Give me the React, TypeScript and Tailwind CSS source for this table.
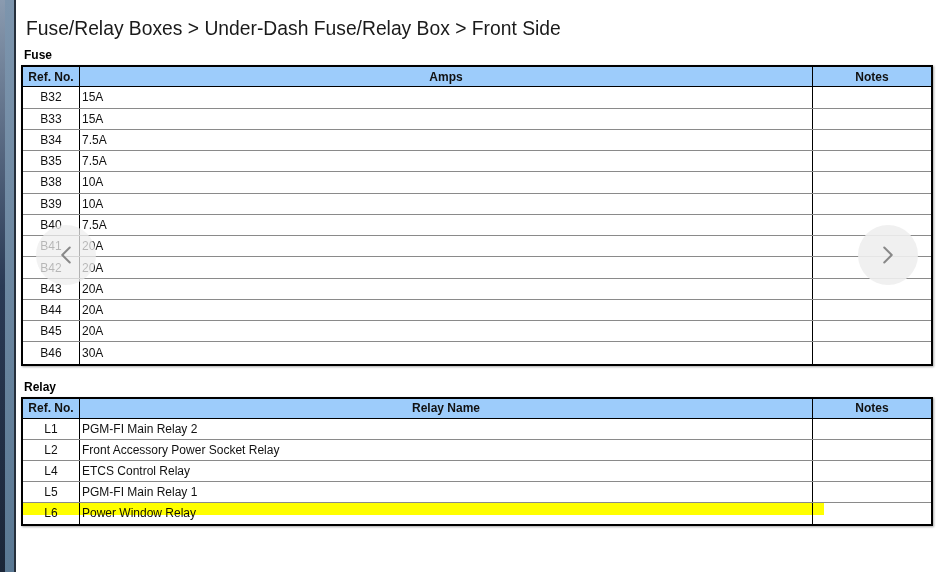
import { ChevronLeft, ChevronRight } from 'lucide-react';

const fuses = [
  ['B32', '15A'],
  ['B33', '15A'],
  ['B34', '7.5A'],
  ['B35', '7.5A'],
  ['B38', '10A'],
  ['B39', '10A'],
  ['B40', '7.5A'],
  ['B41', '20A'],
  ['B42', '20A'],
  ['B43', '20A'],
  ['B44', '20A'],
  ['B45', '20A'],
  ['B46', '30A'],
];

const relays = [
  ['L1', 'PGM-FI Main Relay 2'],
  ['L2', 'Front Accessory Power Socket Relay'],
  ['L4', 'ETCS Control Relay'],
  ['L5', 'PGM-FI Main Relay 1'],
  ['L6', 'Power Window Relay'],
];

function Table({ head, rows, rowH }: { head: string; rows: string[][]; rowH: string }) {
  return (
    <div className="border-[2.5px] border-black shadow-[1px_1px_2px_rgba(0,0,0,0.35)] text-[12px] text-[#111]">
      <div className="grid grid-cols-[57px_733px_1fr] h-[20px] bg-[#9dccfb] border-b-[1.5px] border-black font-bold">
        <div className="flex items-center justify-center border-r border-black">Ref. No.</div>
        <div className="flex items-center justify-center border-r border-black">{head}</div>
        <div className="flex items-center justify-center">Notes</div>
      </div>
      {rows.map(([ref, val], i) => (
        <div
          key={ref}
          className={`grid grid-cols-[57px_733px_1fr] ${rowH} ${i < rows.length - 1 ? 'border-b border-[#8a8a8a]' : ''}`}
        >
          <div className="flex items-center justify-center border-r border-black">{ref}</div>
          <div className="flex items-center pl-[2px] border-r border-black">{val}</div>
          <div />
        </div>
      ))}
    </div>
  );
}

export default function App() {
  return (
    <div className="w-[938px] h-[572px] flex bg-white overflow-hidden font-['Liberation_Sans',Arial,sans-serif]">
      <div className="w-[5px] h-full bg-gradient-to-b from-[#8a9bb0] via-[#2a3a55] to-[#1b2638]" />
      <div className="w-[9px] h-full bg-gradient-to-b from-[#7d95ad] to-[#5a7893]" />
      <div className="w-[2px] h-full bg-[#26303c]" />
      <div className="relative flex-1 pl-[5px] pr-[5px]">
        <h1 className="text-[19.3px] leading-none text-[#1a1a1a] mt-[19px] ml-[5px]">
          Fuse/Relay Boxes &gt; Under-Dash Fuse/Relay Box &gt; Front Side
        </h1>
        <div className="text-[12px] font-bold text-black mt-[11px] ml-[3px] leading-none">Fuse</div>
        <div className="mt-[4px]">
          <Table head="Amps" rows={fuses} rowH="h-[21.28px]" />
        </div>
        <div className="text-[12px] font-bold text-black mt-[15px] ml-[3px] leading-none">Relay</div>
        <div className="mt-[4px] relative">
          <Table head="Relay Name" rows={relays} rowH="h-[21px]" />
          <div className="absolute left-0 top-[106px] w-[803px] h-[12px] bg-[#ffff00] mix-blend-multiply" />
        </div>

        <div className="absolute left-[20px] top-[225px] w-[60px] h-[60px] rounded-full bg-[#eeeeee]/75 flex items-center justify-center">
          <ChevronLeft size={30} strokeWidth={1.6} className="text-[#888]" />
        </div>
        <div className="absolute left-[842px] top-[225px] w-[60px] h-[60px] rounded-full bg-[#eeeeee]/90 flex items-center justify-center">
          <ChevronRight size={30} strokeWidth={1.6} className="text-[#888]" />
        </div>
      </div>
    </div>
  );
}
